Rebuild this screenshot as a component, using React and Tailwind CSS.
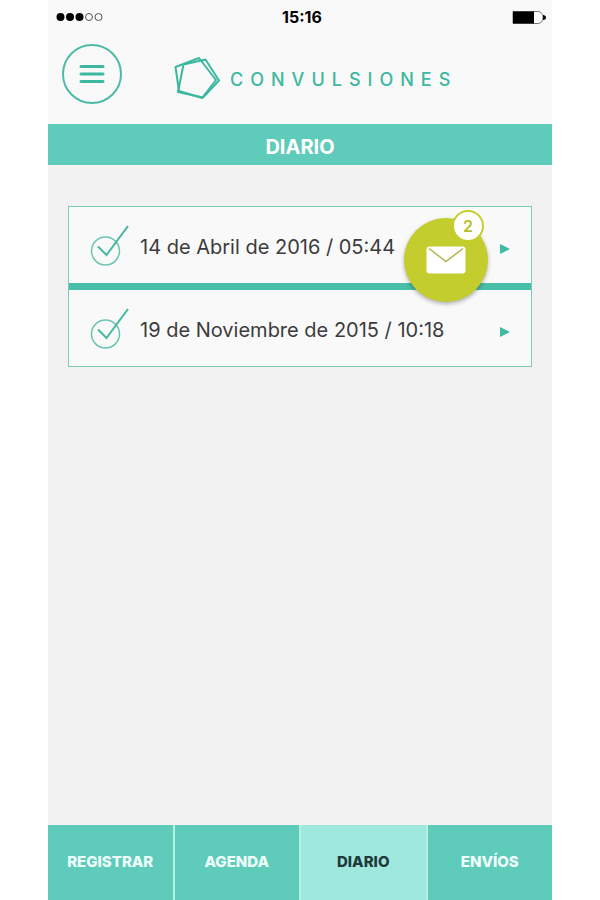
import React from 'react'

const entries = [
    { id: 1, date: '14 de Abril de 2016 / 05:44' },
    { id: 2, date: '19 de Noviembre de 2015 / 10:18' },
]

const tabs = ['REGISTRAR', 'AGENDA', 'DIARIO', 'ENVÍOS']

function StatusBar() {
    return (
        <div className="relative flex items-center justify-between h-[34px] pl-2 pr-[6px]">
            {/* Signal */}
            <svg width="48" height="10" viewBox="0 0 48 10">
                <circle cx="4.5" cy="5" r="4" fill="#000" />
                <circle cx="14" cy="5" r="4" fill="#000" />
                <circle cx="23.5" cy="5" r="4" fill="#000" />
                <circle cx="33" cy="5" r="3.5" fill="none" stroke="#555" />
                <circle cx="42.5" cy="5" r="3.5" fill="none" stroke="#555" />
            </svg>
            <span className="absolute inset-x-0 pl-1 text-center text-base font-bold text-black">15:16</span>
            {/* Battery */}
            <svg width="34" height="16" viewBox="0 0 34 16">
                <path d="M1 2.5H26Q31 3 31 8.5T26 14.5H1Z" fill="#fff" stroke="#777" />
                <path d="M1 2.5H22V14.5H1Z" fill="#000" />
                <path d="M31 6Q34 6.5 34 8.5T31 11Z" fill="#000" />
            </svg>
        </div>
    )
}

function Logo() {
    return (
        <div className="flex items-center gap-[10px] text-[#3cb8a0]">
            <svg width="46" height="44" viewBox="0 0 46 44" fill="none" stroke="currentColor" strokeWidth="2" strokeLinejoin="round">
                <path d="M1.5 11L25 2L42 24L28 42L5 35Z" />
                <path d="M9.5 8.5L31.5 3.5L45 24.5L29 41.5L4 36Z" />
            </svg>
            <span className="pt-1 text-lg font-medium tracking-[7px]">CONVULSIONES</span>
        </div>
    )
}

function DiaryRow({ entry }) {
    return (
        <li className="border-b-[7px] border-[#47bfa9] last:border-b-0">
            <button className="flex items-center w-full h-[76px] pl-[21px] pr-5 text-left">
                <svg width="40" height="42" viewBox="0 0 40 42" fill="none" stroke="#43b7a1">
                    <circle cx="15.5" cy="27" r="14" strokeWidth="1.5" stroke="#6cc5b4" />
                    <path d="M8 22.5L16.5 31L38 2" strokeWidth="2" />
                </svg>
                <span className="flex-1 ml-[10px] pt-1 text-xl text-[#3c3c3c] whitespace-nowrap">{entry.date}</span>
                <svg width="12" height="12" viewBox="0 0 12 12" fill="#3fbaa3" className="mt-2">
                    <path d="M1 1L11 6L1 11Z" />
                </svg>
            </button>
        </li>
    )
}

function MailButton({ count }) {
    return (
        <button
            aria-label="Mensajes"
            className="absolute top-3 right-11 flex items-center justify-center w-[84px] h-[84px] rounded-full bg-[#c3cd2d] shadow-[0_2px_4px_rgba(0,0,0,0.3)]"
        >
            <svg width="40" height="28" viewBox="0 0 40 28">
                <rect x="0.5" y="0.5" width="39" height="27" rx="3" fill="#fff" />
                <path d="M3 2.5L20 15.5L37 2.5" fill="none" stroke="#b3b64a" strokeWidth="1.5" />
            </svg>
            {/* Unread badge */}
            <span className="absolute -top-2 right-1 flex items-center justify-center w-8 h-8 rounded-full border-2 border-[#c3cd2d] bg-white text-base font-semibold text-[#b5bf2b]">
                {count}
            </span>
        </button>
    )
}

export default function App() {
    const active = 'DIARIO'

    return (
        <div className="min-h-screen flex bg-white px-12 font-['Inter',sans-serif]">
            <div className="flex-1 flex flex-col bg-[#f2f2f2]">
                <header className="bg-[#f9f9f9]">
                    <StatusBar />
                    <div className="flex items-start gap-[52px] h-[90px] pl-[14px] pt-[10px]">
                        <button
                            aria-label="Menú"
                            className="flex items-center justify-center w-[60px] h-[60px] rounded-full border-2 border-[#4dbba7] text-[#3cb8a0]"
                        >
                            <svg width="26" height="20" viewBox="0 0 26 20" stroke="currentColor" strokeWidth="3" strokeLinecap="round">
                                <path d="M2 2.5H24M2 10H24M2 17.5H24" />
                            </svg>
                        </button>
                        <div className="pt-3">
                            <Logo />
                        </div>
                    </div>
                </header>

                <h1 className="h-[41px] flex items-center justify-center pt-1 bg-[#5fcbba] text-xl font-bold text-white">
                    DIARIO
                </h1>

                <main className="flex-1 px-5 pt-[41px]">
                    <div className="relative">
                        <ul className="border border-[#7fc9bb] bg-[#f9f9f9]">
                            {entries.map((entry) => (
                                <DiaryRow key={entry.id} entry={entry} />
                            ))}
                        </ul>
                        <MailButton count={2} />
                    </div>
                </main>

                <nav className="grid grid-cols-4 gap-[2px] h-[75px] bg-[#b4efe4]">
                    {tabs.map((tab) => (
                        <button
                            key={tab}
                            className={`text-[15px] font-extrabold ${tab === active ? 'bg-[#9fe8dd] text-[#1f3a3a]' : 'bg-[#5fcbba] text-[#effffc]'}`}
                        >
                            {tab}
                        </button>
                    ))}
                </nav>
            </div>
        </div>
    )
}
